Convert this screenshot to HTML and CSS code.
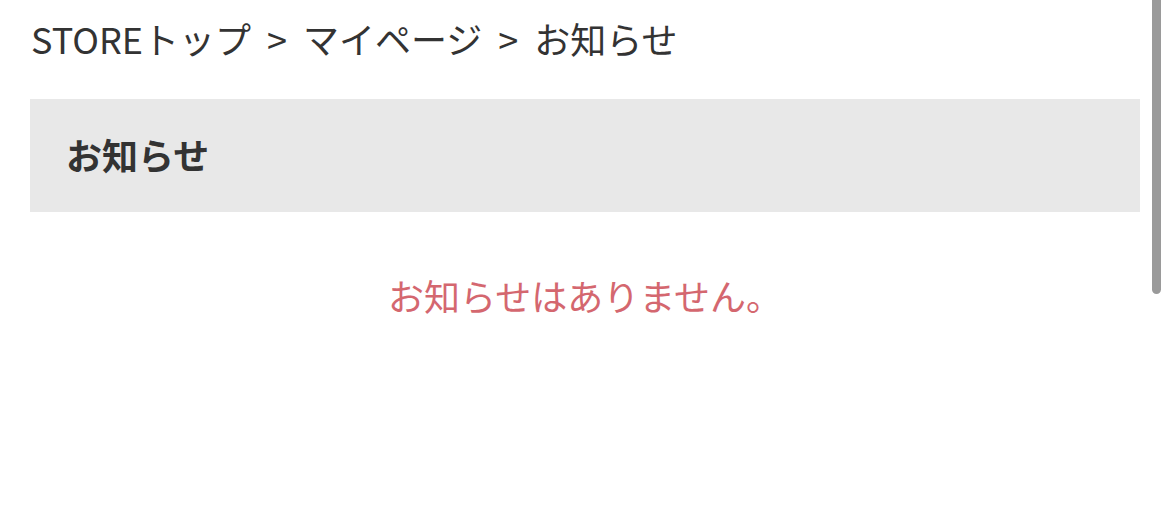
FILE: index.html
```html
<!DOCTYPE html>
<html lang="ja">
<head>
<meta charset="utf-8">
<link rel="stylesheet" href="styles.css">
</head>
<body>
<div class="page">
  <nav class="breadcrumb"><span>STOREトップ</span><span class="sep">&gt;</span><span>マイページ</span><span class="sep">&gt;</span><span>お知らせ</span></nav>
  <section class="panel">
    <h1 class="panel-title">お知らせ</h1>
  </section>
  <p class="empty">お知らせはありません。</p>
</div>
<div class="scrollbar"></div>
</body>
</html>
```
FILE: styles.css
```css
html, body {
  margin: 0;
  padding: 0;
  background: #fff;
}
body {
  font-family: "Noto Sans CJK JP", "Noto Sans", sans-serif;
  color: #333;
  width: 1170px;
  height: 506px;
  overflow: hidden;
  position: relative;
}
.page {
  padding: 0 30px;
}
.breadcrumb {
  height: 76px;
  line-height: 76px;
  font-size: 36px;
  color: #333;
  padding-left: 1px;
  white-space: nowrap;
}
.sep {
  margin: 0 16px;
}
.panel {
  margin-top: 23px;
  height: 113px;
  box-sizing: border-box;
  padding: 0 0 4px 36px;
  background: #e8e8e8;
  display: flex;
  align-items: center;
}
.panel-title {
  margin: 0;
  font-size: 36px;
  font-weight: 700;
  line-height: 1;
  color: #333;
}
.empty {
  margin: 65px 0 0;
  text-align: center;
  font-size: 36px;
  line-height: 36px;
  color: #d4676f;
}
.scrollbar {
  position: absolute;
  top: 0;
  left: 1152px;
  width: 9px;
  height: 294px;
  background: #9a9a9a;
  border-radius: 0 0 5px 5px;
}
```
